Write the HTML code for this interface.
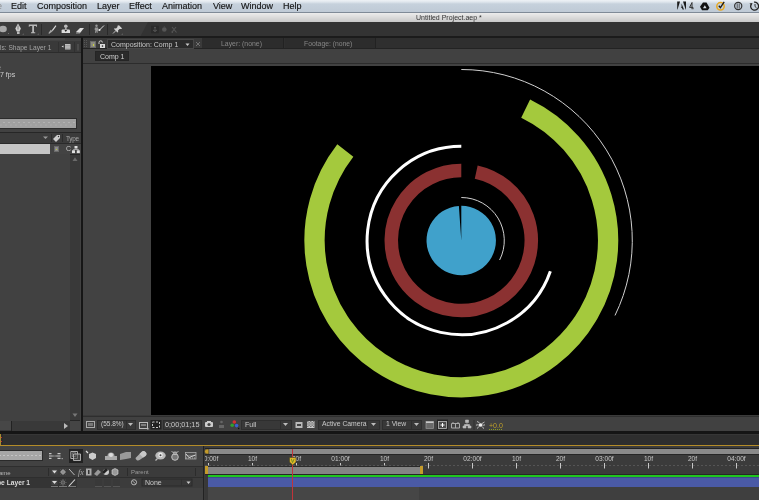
<!DOCTYPE html>
<html><head><meta charset="utf-8">
<style>
*{margin:0;padding:0;box-sizing:border-box}
html,body{width:759px;height:500px;overflow:hidden;background:#424242;font-family:"Liberation Sans",sans-serif}
.a{position:absolute}
.t{position:absolute;white-space:pre;line-height:1;will-change:transform}
svg{position:absolute;overflow:visible;will-change:transform}
</style></head><body>
<!-- mac menu bar -->
<div class="a" style="left:0;top:0;width:759px;height:13px;background:linear-gradient(#eef2f6 0,#dfe6ed 2px,#c6d1dc 4px,#bfcad6 12px);border-bottom:1px solid #7f8a97"></div>
<div class="t" style="left:-3px;top:2px;font-size:9px;color:#888">e</div>
<div class="t" style="left:11px;top:2px;font-size:9px;color:#151515;-webkit-text-stroke:0.15px #151515">Edit</div>
<div class="t" style="left:37px;top:2px;font-size:9px;color:#151515;-webkit-text-stroke:0.15px #151515">Composition</div>
<div class="t" style="left:97px;top:2px;font-size:9px;color:#151515;-webkit-text-stroke:0.15px #151515">Layer</div>
<div class="t" style="left:129px;top:2px;font-size:9px;color:#151515;-webkit-text-stroke:0.15px #151515">Effect</div>
<div class="t" style="left:162px;top:2px;font-size:9px;color:#151515;-webkit-text-stroke:0.15px #151515">Animation</div>
<div class="t" style="left:213px;top:2px;font-size:9px;color:#151515;-webkit-text-stroke:0.15px #151515">View</div>
<div class="t" style="left:241px;top:2px;font-size:9px;color:#151515;-webkit-text-stroke:0.15px #151515">Window</div>
<div class="t" style="left:283px;top:2px;font-size:9px;color:#151515;-webkit-text-stroke:0.15px #151515">Help</div>
<!-- status icons -->
<svg style="left:676px;top:0px" width="83" height="12">
 <path d="M1.2 1.5H4L1.5 9.5H1.2Z" fill="#1a1a1a"/><path d="M7 1.5H10V9.5H9.7Z" fill="#1a1a1a"/><path d="M5.5 3.5L8 9.5H6.6L5.9 7.8H4.8L5.6 6.6Z" fill="#1a1a1a"/>
 <path d="M16 2.5L13.6 7.4H17V9.2M16 2.5V9.2" fill="none" stroke="#333" stroke-width="1"/>
 <path d="M27 2.5H30.5L33.5 7.8L31.7 10.2H26L24 6.8Z" fill="#111"/><path d="M28.8 5.2L30.6 8.3H27Z" fill="#d4dbe3"/>
 <circle cx="44.5" cy="6.3" r="3.7" fill="none" stroke="#e8a820" stroke-width="1.5"/>
 <path d="M42.8 5.8L44.4 7.6L48.2 1.8" fill="none" stroke="#1a1a1a" stroke-width="1.3"/>
 <circle cx="62.2" cy="6" r="3.6" fill="none" stroke="#333" stroke-width="1.2"/><path d="M61.2 3.5V8.5M63.2 3.5V8.5" stroke="#333" stroke-width="0.8"/>
 <path d="M78 2.2A4 4 0 1 1 75 4.5" fill="none" stroke="#222" stroke-width="1.3"/><path d="M73.5 3.5L75.5 5.5L76.5 3Z" fill="#222"/><path d="M79 4V6.5L80.5 7.8" fill="none" stroke="#222" stroke-width="0.9"/>
</svg>
<!-- title bar -->
<div class="a" style="left:0;top:13px;width:759px;height:9px;background:linear-gradient(#ececec,#c8c8c8)"></div>
<div class="t" style="left:416px;top:14.3px;font-size:7px;color:#333">Untitled Project.aep *</div>
<!-- toolbar -->
<div class="a" style="left:0;top:22px;width:759px;height:15px;background:#3c3c3c"></div><svg style="left:0;top:22px" width="759" height="15"><path d="M148 0H759V15H140Z" fill="#333"/></svg>
<div class="a" style="left:0;top:36px;width:759px;height:2px;background:#1b1b1b"></div>
<div class="a" style="left:41px;top:24px;width:1px;height:11px;background:#2a2a2a"></div>
<div class="a" style="left:89px;top:24px;width:1px;height:11px;background:#2a2a2a"></div>
<div class="a" style="left:107px;top:24px;width:1px;height:11px;background:#2a2a2a"></div>
<svg style="left:0;top:22px" width="180" height="15">
 <ellipse cx="3" cy="7" rx="3.8" ry="3.2" fill="#a8a8a8"/><path d="M8 12H9V11Z" fill="#aaa"/>
 <path d="M18 1.6L20.9 6.5L19.5 9.5H16.7L15.3 6.5Z" fill="#d0d0d0"/><path d="M18 3.5V7.5" stroke="#555" stroke-width="0.7"/><rect x="17" y="9.6" width="2.6" height="2.4" fill="#bbb"/><path d="M22.5 12.5H23.5V11.5Z" fill="#aaa"/>
 <path d="M28.8 2.6H37V5H36.3V4H34V10.2H35.2V11.2H31V10.2H32.2V4H29.5V5H28.8Z" fill="#b8b8b8"/><path d="M37.5 12.5H38.5V11.5Z" fill="#aaa"/>
 <path d="M48.3 11.2L50.8 7.8L52.6 9.2L49.3 11.8Z" fill="#aaa"/><path d="M51.8 8.2L55.6 3.2L56.4 4L52.8 9Z" fill="#ddd"/>
 <circle cx="65.8" cy="4.2" r="1.8" fill="#bbb"/><rect x="65" y="5.5" width="1.6" height="2" fill="#aaa"/><path d="M61.6 11V8.5Q61.6 7.5 62.8 7.5H68.8Q70 7.5 70 8.5V11Z" fill="#ddd"/><path d="M64.5 8H67.1L65.8 10Z" fill="#222"/>
 <path d="M76 10L80 6H84L80 11Z" fill="#ddd"/><path d="M76 11L80 11" stroke="#999" stroke-width="1"/>
 <circle cx="96.5" cy="3.8" r="1.2" fill="#999"/><path d="M95 5.5H98L98.5 8L97.8 8.3L97.5 11H96.8L96.3 9L95.7 11H95L95.3 8L94.5 7.5Z" fill="#999"/><path d="M99 8.5L104 3.5" stroke="#ddd" stroke-width="1"/><circle cx="99.5" cy="8" r="1" fill="#eee"/>
 <path d="M119 3.2L122.2 6.4L121 7.1L119.5 7L118 8.5L118.2 10L117.5 10.5L114 7L114.5 6.3L116 6.5L117.5 5L117.4 3.8Z" fill="#d0d0d0"/><path d="M116.2 8.3L113 11.5" stroke="#ccc" stroke-width="0.9"/><path d="M121.5 12.5H122.5V11.5Z" fill="#aaa"/>
 <rect x="151.5" y="4" width="7" height="7" fill="#2b2b2b" stroke="#2a2a2a" stroke-width="0.5"/><path d="M155 5V10M153 8Q155 10.5 157 8" stroke="#5a5a5a" stroke-width="0.9" fill="none"/><circle cx="155" cy="5.5" r="0.8" fill="#5a5a5a"/>
 <circle cx="164.3" cy="7.5" r="2.3" fill="#555"/><path d="M164.3 4.5V5" stroke="#555"/>
 <path d="M172 5L176.5 10.5M176 5L172.5 9.5" stroke="#555" stroke-width="1.1"/><circle cx="172.3" cy="10" r="0.9" fill="#555"/>
</svg>

<!-- left panel -->
<div class="a" style="left:0;top:38px;width:65px;height:2px;background:#4a4a4a"></div>
<div class="a" style="left:0;top:41px;width:81px;height:12px;background:#393939;border-bottom:1px solid #2c2c2c"></div>
<div class="t" style="left:0px;top:45.2px;font-size:6.6px;color:#a4a4a4">ls: Shape Layer 1</div>
<div class="a" style="left:58px;top:42px;width:1px;height:10px;background:#303030"></div>
<div class="a" style="left:74px;top:42px;width:1px;height:10px;background:#303030"></div>
<svg style="left:60px;top:43px" width="22" height="9">
 <path d="M1.5 3.5L3.5 2.5V4.5Z" fill="#ddd"/><rect x="5" y="1" width="5.5" height="5.5" fill="#c0c0c0"/><path d="M5 2.5H10.5M5 4H10.5M5 5.5H10.5" stroke="#8a8a8a" stroke-width="0.5"/>
 <rect x="17" y="1" width="2" height="6.5" fill="#4a4a4a"/>
</svg>
<div class="a" style="left:0;top:53px;width:81px;height:378px;background:#414141"></div>
<div class="t" style="left:-2.6px;top:63.5px;font-size:7px;color:#cfcfcf">e</div>
<div class="t" style="left:0.4px;top:71px;font-size:7px;color:#d0d0d0">7 fps</div>
<div class="a" style="left:-1px;top:118px;width:78px;height:11px;background:#2c2c2c"></div><div class="a" style="left:0;top:119px;width:76px;height:9px;background:radial-gradient(circle at 2px 3.5px,#b2b2b2 0.5px,transparent 0.8px) 2px 0/5px 9px repeat-x,radial-gradient(circle at 2px 6px,#b2b2b2 0.5px,transparent 0.8px) 4px 0/5px 9px repeat-x,#a0a0a0"></div>
<div class="a" style="left:0;top:132px;width:81px;height:1px;background:#262626"></div>
<div class="a" style="left:0;top:133px;width:81px;height:10px;background:#3b3b3b"></div>
<div class="a" style="left:0;top:143px;width:81px;height:1px;background:#2a2a2a"></div>
<div class="a" style="left:51px;top:134px;width:1px;height:8px;background:#2c2c2c"></div>
<div class="a" style="left:62px;top:134px;width:1px;height:8px;background:#2c2c2c"></div>
<svg style="left:40px;top:134px" width="41" height="9">
 <path d="M3 2.5H8L5.5 5Z" fill="#999"/>
 <path d="M13 5L17 1H20V4L16 8Z" fill="#ccc"/><circle cx="18.5" cy="2.5" r="0.7" fill="#333"/>
</svg>
<div class="t" style="left:66px;top:135.5px;font-size:6.4px;letter-spacing:-0.3px;color:#a8a8a8">Type</div>
<div class="a" style="left:0;top:144px;width:50px;height:10px;background:#c5c5c5"></div>
<div class="a" style="left:50px;top:144px;width:31px;height:10px;background:#434343"></div>
<div class="a" style="left:54px;top:146px;width:5px;height:6px;background:#8a8a8a;border:1px solid #6a6a6a"></div><div class="a" style="left:56px;top:148.5px;width:1.2px;height:1.2px;background:#b8c83a"></div>
<div class="t" style="left:66px;top:145px;font-size:7px;color:#c8c8c8">C</div>
<svg style="left:71px;top:144px" width="10" height="10">
 <rect x="3.5" y="2" width="3" height="2.5" fill="#e0e0e0"/><path d="M5 4.5V5.5M2.5 6.5V5.5H7.5V6.5" stroke="#bbb" stroke-width="0.8" fill="none"/><rect x="1" y="6.3" width="3" height="2.8" fill="#e0e0e0"/><rect x="5.8" y="6.3" width="3" height="2.8" fill="#e0e0e0"/>
</svg>
<div class="a" style="left:70px;top:154px;width:10px;height:1px;background:#262626"></div>
<div class="a" style="left:70px;top:155px;width:10px;height:265px;background:#393939"></div>
<svg style="left:70px;top:155px" width="10" height="265">
 <path d="M2.5 6H7.5L5 2.3Z" fill="#6a6a6a"/>
 <path d="M2.5 258.5H7.5L5 262Z" fill="#777"/>
</svg>
<div class="a" style="left:70px;top:420px;width:10px;height:1px;background:#262626"></div>
<div class="a" style="left:0;top:421px;width:70px;height:10px;background:#393939"></div>
<div class="a" style="left:0;top:421px;width:11px;height:9px;background:#474747"></div>
<div class="a" style="left:11px;top:421px;width:1px;height:10px;background:#222"></div>
<svg style="left:63px;top:422px" width="6" height="8"><path d="M1 1V7L5 4Z" fill="#bbb"/></svg>
<div class="a" style="left:70px;top:421px;width:10px;height:10px;background:#454545"></div>
<div class="a" style="left:81px;top:37px;width:2px;height:395px;background:#161616"></div>

<!-- comp panel -->
<div class="a" style="left:83px;top:38px;width:676px;height:10px;background:#2f2f2f"></div>
<div class="a" style="left:83px;top:38px;width:120px;height:10px;background:#3a3a3a"></div>
<div class="a" style="left:83px;top:48px;width:676px;height:1px;background:#232323"></div>
<div class="a" style="left:90px;top:41px;width:6px;height:7px;background:#8a8a80;border:1px solid #6a6a6a"></div><div class="a" style="left:92.5px;top:43.5px;width:1.2px;height:2px;background:#c8d040"></div><div class="a" style="left:84px;top:40px;width:1px;height:8px;background:repeating-linear-gradient(#555 0,#555 1px,transparent 1px,transparent 2px)"></div><div class="a" style="left:86px;top:40px;width:1px;height:8px;background:repeating-linear-gradient(#555 0,#555 1px,transparent 1px,transparent 2px)"></div>
<svg style="left:97px;top:40px" width="9" height="9">
 <path d="M2 4V2.5A1.7 1.7 0 0 1 5.4 2.5" fill="none" stroke="#ccc" stroke-width="1"/><rect x="3" y="4" width="5" height="4" fill="#ddd"/><rect x="4.8" y="5.3" width="1.4" height="1.5" fill="#333"/>
</svg>
<div class="a" style="left:107px;top:39px;width:87px;height:9.5px;background:#2b2b2b;border:1px solid #474747"></div>
<div class="t" style="left:111px;top:41px;font-size:7px;color:#c8c8c8">Composition: Comp 1</div>
<svg style="left:185px;top:43px" width="5" height="4"><path d="M0.5 0.5H4.5L2.5 3Z" fill="#ccc"/></svg>
<svg style="left:195px;top:41px" width="6" height="6"><path d="M1 1L5 5M5 1L1 5" stroke="#777" stroke-width="0.9"/></svg>
<div class="a" style="left:202px;top:38px;width:82px;height:10px;background:#2c2c2c;border-right:1px solid #222"></div>
<div class="t" style="left:221px;top:41px;font-size:6.9px;color:#868686">Layer: (none)</div>
<div class="a" style="left:285px;top:38px;width:91px;height:10px;background:#2c2c2c;border-right:1px solid #222"></div>
<div class="t" style="left:304px;top:41px;font-size:6.8px;color:#868686">Footage: (none)</div>
<div class="a" style="left:83px;top:49px;width:676px;height:14px;background:#414141"></div>
<div class="a" style="left:95px;top:51px;width:34px;height:10px;background:#2a2a2a;border:1px solid #252525"></div>
<div class="t" style="left:100px;top:53px;font-size:7px;color:#cfcfcf">Comp 1</div>
<div class="a" style="left:83px;top:63px;width:676px;height:1px;background:#2c2c2c"></div>
<div class="a" style="left:83px;top:64px;width:676px;height:352px;background:#424242"></div>
<div class="a" style="left:151px;top:66px;width:608px;height:349px;background:#000"></div>
<div class="a" style="left:83px;top:415px;width:676px;height:1px;background:#3a3a3a"></div><div class="a" style="left:83px;top:416px;width:676px;height:1px;background:#2e2e2e"></div>
<div class="a" style="left:83px;top:417px;width:676px;height:14px;background:#414141"></div>
<!-- viewer bottom bar -->
<svg style="left:83px;top:417px" width="676" height="14">
 <rect x="3.5" y="4.5" width="8" height="6" fill="none" stroke="#aaa" stroke-width="1"/><rect x="5" y="6" width="5" height="3" fill="#777"/>
 <rect x="14.5" y="3.5" width="38" height="9" fill="#383838" stroke="#2e2e2e"/>
 <path d="M45 6H50L47.5 9Z" fill="#bbb"/><rect x="43" y="4" width="1" height="8" fill="#2e2e2e"/>
 <rect x="56.5" y="5.5" width="8" height="6" fill="none" stroke="#bbb" stroke-width="1"/><path d="M58 8H63" stroke="#bbb"/><rect x="64" y="11" width="1.5" height="1.5" fill="#bbb"/>
 <rect x="67.5" y="3" width="11" height="9.5" fill="#222"/>
 <rect x="69.5" y="5" width="7" height="5.5" fill="none" stroke="#ccc" stroke-width="1" stroke-dasharray="2 1.5"/>
 <rect x="80.5" y="3.5" width="38" height="9" fill="#383838" stroke="#2e2e2e"/>
 <rect x="122" y="5" width="8" height="5" rx="1" fill="#ccc"/><circle cx="126" cy="7.5" r="1.6" fill="#444"/><rect x="124" y="4" width="4" height="1" fill="#ccc"/>
 <circle cx="138.5" cy="5" r="1.3" fill="#666"/><path d="M136 11V8H141V11Z" fill="#666"/>
 <circle cx="151.3" cy="5" r="1.8" fill="#d43030"/><circle cx="149.2" cy="8.3" r="1.8" fill="#30a030"/><circle cx="153.6" cy="8.6" r="1.8" fill="#3a60d0"/><rect x="155" y="10.8" width="1.3" height="1.3" fill="#111"/>
 <rect x="158.5" y="3.5" width="50" height="9" fill="#383838" stroke="#2e2e2e"/>
 <path d="M200 6H205L202.5 9Z" fill="#bbb"/><rect x="197" y="4" width="1" height="8" fill="#2e2e2e"/>
 <rect x="212.5" y="5" width="7" height="6" fill="#bbb"/><rect x="214" y="7" width="4" height="2" fill="#444"/>
 <rect x="224" y="4" width="7.5" height="7" fill="#c8c8c8"/><path d="M224 4h1.5v1.2H224zM227 4h1.5v1.2H227zM230 4h1.5v1.2H230zM225.5 5.2h1.5v1.2h-1.5zM228.5 5.2h1.5v1.2h-1.5zM224 6.4h1.5v1.2H224zM227 6.4h1.5v1.2H227zM230 6.4h1.5v1.2H230zM225.5 7.6h1.5v1.2h-1.5zM228.5 7.6h1.5v1.2h-1.5zM224 8.8h1.5v1.2H224zM227 8.8h1.5v1.2H227zM230 8.8h1.5v1.2H230z" fill="#777"/>
 <rect x="235.5" y="3.5" width="61" height="9" fill="#383838" stroke="#2e2e2e"/>
 <path d="M288 6H293L290.5 9Z" fill="#bbb"/><rect x="284" y="4" width="1" height="8" fill="#2e2e2e"/>
 <rect x="299.5" y="3.5" width="39" height="9" fill="#383838" stroke="#2e2e2e"/>
 <path d="M331 6H336L333.5 9Z" fill="#bbb"/><rect x="328" y="4" width="1" height="8" fill="#2e2e2e"/>
 <rect x="343" y="4.5" width="7.5" height="7" fill="#6a6a6a" stroke="#999" stroke-width="0.7"/><rect x="343" y="4.5" width="7.5" height="1.5" fill="#c8c8c8"/>
 <rect x="354" y="2.5" width="11" height="10.5" fill="#262626"/><rect x="355.5" y="4.5" width="8" height="7" fill="#4a4a4a" stroke="#bbb" stroke-width="0.8"/><path d="M357.5 8H361.5M359.5 6V10" stroke="#fff" stroke-width="1"/>
 <path d="M368.5 6.5H376.5V11H368.5Z M370 5V6.5M375 5V6.5 M372.5 6.5V11" fill="none" stroke="#aaa" stroke-width="1"/>
 <path d="M380 11H383V9H380ZM385 11H388V9H385Z M382.5 3H385.5V5.5H382.5Z M384 5.5V7.5M381.5 9V7.5H386.5V9" fill="#bbb" stroke="#bbb" stroke-width="0.6"/>
 <rect x="390.5" y="3" width="1" height="10" fill="#303030"/>
 <circle cx="397.5" cy="8" r="1.8" fill="#eee"/><path d="M394 4.5Q396 5 397 6.5M401.5 5Q400 6 398.5 6.8M394 11.5Q395.5 10 396.5 9.3M401 11.5Q399.5 10.5 398.7 9.3M393 8.2Q394.5 7.5 395.8 8M402 7.8Q400.5 8.5 399.3 8" stroke="#ccc" stroke-width="0.9" fill="none"/>
</svg>
<div class="t" style="left:101px;top:421px;font-size:6.5px;color:#c8c8c8">(55.8%)</div>
<div class="t" style="left:165px;top:421px;font-size:7.3px;color:#c8c8c8">0;00;01;15</div>
<div class="t" style="left:245px;top:421px;font-size:7px;color:#c8c8c8">Full</div>
<div class="t" style="left:322px;top:421px;font-size:6.8px;color:#c8c8c8">Active Camera</div>
<div class="t" style="left:386px;top:421px;font-size:6.8px;color:#c8c8c8">1 View</div>
<div class="t" style="left:489px;top:421.5px;font-size:7px;color:#c0a028;text-decoration:underline;text-decoration-style:dotted;text-decoration-color:#8a9a20">+0.0</div>

<!-- rings -->
<svg style="left:151px;top:66px" width="608" height="349" viewBox="151 66 608 349">
<path d="M461.3 240.5L461.30 205.80A34.7 34.7 0 1 1 458.88 205.88Z" fill="#40a1cb"/>
<path d="M461.30 197.50A43 43 0 0 1 499.61 260.02" fill="none" stroke="#d0d0d0" stroke-width="1"/>
<path d="M476.21 172.11A70 70 0 1 1 461.30 170.50" fill="none" stroke="#8b3131" stroke-width="13.5"/>
<path d="M550.37 271.17A94.2 94.2 0 1 1 461.30 146.30" fill="none" stroke="#ffffff" stroke-width="3"/>
<path d="M525.65 108.56A146.8 146.8 0 1 1 345.31 150.53" fill="none" stroke="#a4c93d" stroke-width="20.3"/>
<path d="M461.30 69.50A171 171 0 0 1 614.99 315.46" fill="none" stroke="#d0d0d0" stroke-width="1"/>
</svg>

<!-- timeline -->
<div class="a" style="left:0;top:431px;width:759px;height:3px;background:#151515"></div>
<div class="a" style="left:0;top:434px;width:759px;height:11px;background:#2e2e2e;border-top:1px solid #363636"></div>
<div class="a" style="left:0;top:434px;width:1px;height:11px;background:#a88a30"></div><div class="a" style="left:1px;top:434px;width:1.5px;height:11px;background:#2a2a2a"></div><div class="a" style="left:1px;top:437px;width:1px;height:1px;background:#c03030"></div><div class="a" style="left:1px;top:441px;width:1px;height:1px;background:#c03030"></div>
<div class="a" style="left:0;top:445px;width:759px;height:1px;background:#b48c28"></div>
<div class="a" style="left:0;top:446px;width:759px;height:54px;background:#424242"></div>
<!-- timeline left -->
<div class="a" style="left:-1px;top:450px;width:44px;height:11px;background:#2a2a2a"></div><div class="a" style="left:0;top:451px;width:42px;height:9px;background:radial-gradient(circle at 2px 4.5px,#c4c4c4 0.6px,transparent 0.9px) 2px 0/4px 9px repeat-x,#a6a6a6"></div>
<div class="a" style="left:69px;top:449px;width:14px;height:14px;background:#222"></div>
<svg style="left:44px;top:446px" width="160" height="20">
 <path d="M5 7H7.5V8.2H5ZM5 9.4H7.5V10.6H5ZM5 11.8H7.5V13H5ZM13.5 7H16.5V8.2H13.5ZM13.5 9.4H16.5V10.6H13.5ZM13.5 11.8H16.5V13H13.5ZM7.5 9.4L10.5 9.7L13.5 9.4V10.6L10.5 10.3L7.5 10.6Z" fill="#c8c8c8"/><rect x="17.6" y="12" width="1.2" height="1.2" fill="#aaa"/>
 <path d="M26.8 5.5H33.5V12.5H26.8Z" fill="none" stroke="#bbb" stroke-width="0.9"/><path d="M28.3 6.8H31.8V10.5H28.3Z" fill="none" stroke="#999" stroke-width="0.7"/><path d="M29.5 8H36.5V14.5H29.5Z" fill="#555" fill-opacity="0.6" stroke="#bbb" stroke-width="0.9"/>
 <path d="M42 5L44 7" stroke="#ddd" stroke-width="1.3"/><path d="M45 8L48.5 6.5L52 8V12L48.5 14L45 12Z" fill="#ccc"/>
 <path d="M61 14V10H63.5A3.5 3.5 0 0 1 70.5 10H73V14Z" fill="#aaa"/><circle cx="67" cy="9" r="2" fill="#ddd"/>
 <path d="M76 8L82 6V13L76 14ZM82 6L87 6V12L82 13Z" fill="#999"/>
 <path d="M91.5 12L97.5 6A2.6 2.6 0 0 1 101.5 10L95.5 14A2.6 2.6 0 0 1 91.5 12Z" fill="#aaa"/><path d="M97.5 6A2.6 2.6 0 0 1 101.5 10L99 11.5L95.5 8Z" fill="#c8c8c8"/>
 <ellipse cx="116.5" cy="9.5" rx="5.2" ry="4" fill="#bbb"/><circle cx="116.5" cy="9" r="2.2" fill="#eee"/><circle cx="116.5" cy="9.2" r="1" fill="#444"/><path d="M113.5 12.5L111.5 14.5" stroke="#bbb" stroke-width="1.2"/>
 <circle cx="131" cy="11" r="3.3" fill="#777" stroke="#ccc" stroke-width="0.9"/><rect x="129.8" y="6" width="2.4" height="2.5" fill="#888" stroke="#ccc" stroke-width="0.7"/><path d="M127.5 5.5L129.5 6.5M134.5 5.5L132.5 6.5" stroke="#ccc" stroke-width="0.8"/>
 <rect x="141.5" y="6.5" width="10.5" height="6.5" fill="#505050" stroke="#aaa" stroke-width="0.8"/><path d="M141.5 9.5H152" stroke="#888" stroke-width="0.6"/><path d="M142 8L145 11.5L151.5 9" stroke="#e0e0e0" fill="none" stroke-width="0.9"/><path d="M142 12H152" stroke="#ccc" stroke-width="0.7" stroke-dasharray="1 1"/>
</svg>
<div class="a" style="left:0;top:466px;width:203px;height:1px;background:#2e2e2e"></div>
<div class="a" style="left:0;top:467px;width:203px;height:10px;background:#3b3b3b"></div>
<div class="t" style="left:-1.5px;top:469.5px;font-size:6px;color:#b8b8b8">ame</div>
<div class="a" style="left:48px;top:468px;width:1px;height:8px;background:#2c2c2c"></div>
<div class="a" style="left:127px;top:468px;width:1px;height:8px;background:#2c2c2c"></div>
<div class="a" style="left:195px;top:468px;width:1px;height:8px;background:#2c2c2c"></div>
<div class="t" style="left:131px;top:469px;font-size:6px;color:#9a9a9a">Parent</div>
<svg style="left:48px;top:467px" width="80" height="10">
 <rect x="3.5" y="2.5" width="6" height="5" fill="#444"/><path d="M4 3.5H9L6.5 6.5Z" fill="#ddd"/>
 <circle cx="15" cy="5" r="1.3" fill="none" stroke="#ddd" stroke-width="0.9"/><path d="M15 2V3.2M15 6.8V8M12 5H13.2M16.8 5H18M12.8 2.8L13.6 3.6M17.2 2.8L16.4 3.6M12.8 7.2L13.6 6.4M17.2 7.2L16.4 6.4" stroke="#ddd" stroke-width="0.6"/>
 <path d="M21 2L26.5 8" stroke="#bbb" stroke-width="1"/>
 <text x="30" y="8" font-size="8" font-style="italic" fill="#aaa" font-family="Liberation Serif">fx</text>
 <rect x="38" y="1.5" width="5.5" height="7" fill="#aaa"/><rect x="40" y="3" width="1.5" height="4" fill="#333"/>
 <path d="M46 7L50 2.5L53 5L49 9Z" fill="#999"/>
 <circle cx="58" cy="5" r="3" fill="#ccc"/><path d="M58 2A3 3 0 0 0 58 8Z" fill="#222" transform="rotate(45 58 5)"/>
 <path d="M64 3L67 1.5L70 3V7L67 8.5L64 7Z" fill="#999" stroke="#ddd" stroke-width="0.6"/>
</svg>
<div class="a" style="left:0;top:477px;width:203px;height:1px;background:#2e2e2e"></div>
<div class="a" style="left:0;top:478px;width:77px;height:10px;background:#343434"></div>
<div class="a" style="left:77px;top:478px;width:126px;height:10px;background:#3c3c3c"></div>
<div class="t" style="left:-3px;top:479.5px;font-size:6.7px;font-weight:bold;color:#dcdcdc">pe Layer 1</div>
<svg style="left:48px;top:477px" width="150" height="12">
 <rect x="3.5" y="3" width="6" height="5" fill="#444"/><path d="M4 4H9L6.5 7Z" fill="#ddd"/><path d="M3 9.5H10" stroke="#777"/>
 <circle cx="15" cy="5.5" r="1.8" fill="#555" stroke="#888" stroke-width="0.7"/><path d="M15 2V3M15 8V9M11.5 5.5H12.5M17.5 5.5H18.5M12.5 3L13.2 3.7M17.5 3L16.8 3.7M12.5 8L13.2 7.3M17.5 8L16.8 7.3" stroke="#888" stroke-width="0.6"/><path d="M11 9.5H19" stroke="#777"/>
 <path d="M21 9L27 2.5" stroke="#ddd" stroke-width="1.1"/><path d="M20 9.5H28" stroke="#777"/>
 <rect x="47" y="2" width="7" height="7" fill="#393939"/><rect x="56" y="2" width="7" height="7" fill="#393939"/><rect x="65" y="2" width="7" height="7" fill="#393939"/>
 <path d="M47 9.5H54M56 9.5H63M65 9.5H72" stroke="#555"/>
 <circle cx="86" cy="5.3" r="2.6" fill="none" stroke="#c0c0c0" stroke-width="0.9"/><path d="M84.3 3.8L87.7 6.8" stroke="#c0c0c0" stroke-width="0.8"/>
 <rect x="94" y="2" width="50" height="7" fill="#383838" stroke="#2a2a2a"/><path d="M133.5 2.5V8.5" stroke="#2e2e2e" stroke-width="0.8"/>
 <path d="M138.5 4.5H142.5L140.5 7Z" fill="#ccc"/>
</svg>
<div class="t" style="left:144.5px;top:479.3px;font-size:7px;color:#c8c8c8">None</div>
<div class="a" style="left:0;top:488px;width:203px;height:12px;background:#424242"></div>

<!-- timeline right -->
<div class="a" style="left:203px;top:446px;width:1px;height:54px;background:#222"></div><div class="a" style="left:204px;top:446px;width:1px;height:54px;background:#3a3a3a"></div>
<div class="a" style="left:205px;top:446px;width:554px;height:2px;background:#3c3c3c"></div><div class="a" style="left:205px;top:448px;width:554px;height:1px;background:#222"></div>
<div class="a" style="left:205px;top:449px;width:554px;height:5px;background:#8a8a8a"></div>
<svg style="left:204px;top:448px" width="6" height="7"><path d="M4.8 1H3A2.5 2.5 0 0 0 3 6H4.8Z" fill="#c49b2a" stroke="#222" stroke-width="0.5"/></svg>
<div class="a" style="left:205px;top:454px;width:554px;height:1px;background:#262626"></div><div class="a" style="left:205px;top:455px;width:554px;height:20px;background:#3b3b3b"></div><div class="a" style="left:205px;top:465px;width:554px;height:1px;background:repeating-linear-gradient(90deg,#555 0,#555 2px,transparent 2px,transparent 4px)"></div>
<div class="a" style="left:205px;top:466px;width:215px;height:9px;background:#848484;border-top:1px solid #2a2a2a"></div>
<div class="a" style="left:205px;top:466px;width:3px;height:9px;background:#c49b2a"></div>
<div class="a" style="left:420px;top:466px;width:3px;height:9px;background:#c49b2a"></div>
<div class="a" style="left:205px;top:474px;width:554px;height:1px;background:#262626"></div>
<div class="a" style="left:205px;top:475px;width:3px;height:25px;background:#383838"></div>
<div class="a" style="left:208px;top:475px;width:551px;height:2px;background:#1fc51f"></div>
<div class="a" style="left:208px;top:477px;width:551px;height:10px;background:#4a5aa6"></div><div class="a" style="left:208px;top:477px;width:551px;height:1px;background:#3c4c8c"></div>
<div class="a" style="left:208px;top:487px;width:211px;height:13px;background:#464646"></div>
<div class="a" style="left:419px;top:487px;width:340px;height:13px;background:#3f3f3f"></div>
<svg style="left:205px;top:454px;overflow:hidden" width="554" height="16">
 <g fill="#c8c8c8" font-size="6.6" font-family="Liberation Sans" text-anchor="middle">
  <text x="6" y="7">0:00f</text><text x="47.5" y="7">10f</text><text x="91.5" y="7">20f</text><text x="135.5" y="7">01:00f</text>
  <text x="179.5" y="7">10f</text><text x="223.5" y="7">20f</text><text x="267.5" y="7">02:00f</text><text x="311.5" y="7">10f</text>
  <text x="355.5" y="7">20f</text><text x="399.5" y="7">03:00f</text><text x="443.5" y="7">10f</text><text x="487.5" y="7">20f</text><text x="531.5" y="7">04:00f</text>
 </g>
 <g stroke="#c8c8c8" stroke-width="1">
  <path d="M3.5 9V11.5M47.5 9V11.5M91.5 9V11.5M135.5 9V11.5M179.5 9V11.5M223.5 9V14.5M267.5 9V14.5M311.5 9V14.5M355.5 9V14.5M399.5 9V14.5M443.5 9V14.5M487.5 9V14.5M531.5 9V14.5"/>
 </g>
</svg>
<div class="a" style="left:292px;top:449px;width:1px;height:51px;background:#c0343a"></div>
<svg style="left:288px;top:456px" width="10" height="10">
 <path d="M1.5 1.5H8V6L4.75 9L1.5 6Z" fill="#e3b828" stroke="#3a3a20" stroke-width="0.5"/><path d="M3.3 2.8L4.5 6.5L6.2 2.8" stroke="#6a8a20" fill="none" stroke-width="0.9"/>
</svg>
</body></html>
